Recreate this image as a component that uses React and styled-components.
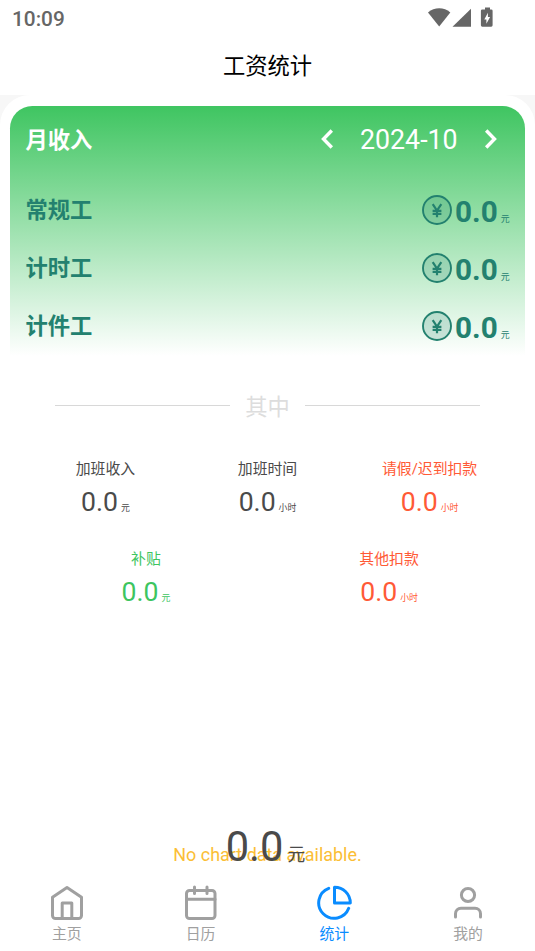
import React from "react";
import styled, { createGlobalStyle } from "styled-components";

const GlobalStyle = createGlobalStyle`
  * {
    box-sizing: border-box;
  }
  body {
    margin: 0;
    background: #ffffff;
    font-family: Roboto, "Noto Sans CJK SC", sans-serif;
  }
`;

const wages = ["常规工", "计时工", "计件工"];

const topStats = [
  { label: "加班收入", value: "0.0", unit: "元", color: "#4a4a4a" },
  { label: "加班时间", value: "0.0", unit: "小时", color: "#4a4a4a" },
  { label: "请假/迟到扣款", value: "0.0", unit: "小时", color: "#ff5a36" },
];

const bottomStats = [
  { label: "补贴", value: "0.0", unit: "元", color: "#3dc55f" },
  { label: "其他扣款", value: "0.0", unit: "小时", color: "#ff5a36" },
];

const tabs = [
  { label: "主页", icon: <HomeIcon /> },
  { label: "日历", icon: <CalendarIcon /> },
  { label: "统计", icon: <ChartIcon />, active: true },
  { label: "我的", icon: <UserIcon /> },
];

export default function App() {
  return (
    <Screen>
      <GlobalStyle />
      <StatusBar>
        <Clock>10:09</Clock>
        <StatusIcons />
      </StatusBar>
      <TitleBar>工资统计</TitleBar>
      <Backdrop>
        <Content>
          <IncomeCard>
            <CardHeader>
              <CardTitle>月收入</CardTitle>
              <MonthPicker>
                <Chevron d="M12.800 2.500 4.500 11l8.300 8.500" />
                <Month>2024-10</Month>
                <Chevron d="M3.200 2.500 11.500 11l-8.300 8.500" />
              </MonthPicker>
            </CardHeader>
            {wages.map((name) => (
              <WageRow key={name}>
                <WageName>{name}</WageName>
                <Amount>
                  <YuanIcon />
                  <AmountValue>0.0</AmountValue>
                  <Unit>元</Unit>
                </Amount>
              </WageRow>
            ))}
          </IncomeCard>
          <Divider>
            <Line />
            <span>其中</span>
            <Line />
          </Divider>
          <StatRow>
            {topStats.map((s) => (
              <StatItem key={s.label} {...s} />
            ))}
          </StatRow>
          <StatRow>
            {bottomStats.map((s) => (
              <StatItem key={s.label} {...s} />
            ))}
          </StatRow>
          <ChartArea>
            <NoData>No chart data available.</NoData>
            <Total>
              0.0<small>元</small>
            </Total>
          </ChartArea>
        </Content>
      </Backdrop>
      <TabBar>
        {tabs.map((t) => (
          <Tab key={t.label} $active={t.active}>
            {t.icon}
            <span>{t.label}</span>
          </Tab>
        ))}
      </TabBar>
    </Screen>
  );
}

function StatItem({ label, value, unit, color }) {
  return (
    <Stat $color={color}>
      <StatLabel>{label}</StatLabel>
      <StatValue>
        {value}
        <Unit>{unit}</Unit>
      </StatValue>
    </Stat>
  );
}

function StatusIcons() {
  return (
    <svg width="68" height="22" viewBox="0 0 68 22" fill="#666666">
      <path d="M0 5.500C6.500-.1 16-.1 22.300 5.500L11.200 19.500z" />
      <path d="M24.500 19.700 43 1.800v17.900z" />
      <path d="M57 .6h5v1.800h1.200a1.400 1.400 0 0 1 1.400 1.400v14.500a1.400 1.400 0 0 1-1.400 1.400h-8.900a1.400 1.400 0 0 1-1.400-1.400V3.800a1.400 1.400 0 0 1 1.400-1.400H57z" />
      <path d="M59.900 5.700 56.300 12.400h2.100v4.300l3.700-6.700h-2.200z" fill="#ffffff" />
    </svg>
  );
}

function Chevron({ d }) {
  return (
    <svg width="16" height="22" viewBox="0 0 16 22" fill="none" stroke="#ffffff" strokeWidth="3.400">
      <path d={d} />
    </svg>
  );
}

function YuanIcon() {
  return (
    <svg width="30" height="30" viewBox="0 0 30 30" fill="none" stroke="#23816f">
      <circle cx="15" cy="15" r="14" fill="#23816f" fillOpacity="0.2" strokeWidth="1.900" />
      <path d="M10.700 9.200 15 15.500l4.300-6.300M15 15V22.300M10.600 15.800h8.800M10.600 18.900h8.800" strokeWidth="2.200" />
    </svg>
  );
}

function HomeIcon() {
  return (
    <TabIcon viewBox="0 0 36 36">
      <path d="M3.500 12.300 18 2.500l14.500 9.800V30.500a3 3 0 0 1-3 3h-23a3 3 0 0 1-3-3z" />
      <path d="M13.200 33V18h9.600V33" />
    </TabIcon>
  );
}

function CalendarIcon() {
  return (
    <TabIcon viewBox="0 0 36 36">
      <rect x="3.500" y="5.500" width="28.500" height="28" rx="3" />
      <path d="M3.500 14.200H32M11.500 2v6.500M24 2v6.500" />
    </TabIcon>
  );
}

function ChartIcon() {
  return (
    <TabIcon viewBox="0 0 36 36">
      <path d="M12.700 3.300A15.500 15.500 0 1 0 32.700 23.300" />
      <path d="M18.500 2.200v15.800H34.300A15.700 15.700 0 0 0 18.500 2.200z" />
    </TabIcon>
  );
}

function UserIcon() {
  return (
    <TabIcon viewBox="0 0 36 36">
      <circle cx="18" cy="10" r="6.600" />
      <path d="M5.500 32V28.700a5.500 5.500 0 0 1 5.500-5.500h14a5.500 5.500 0 0 1 5.500 5.500v3.300" />
    </TabIcon>
  );
}

const Screen = styled.div`
  width: 535px;
  height: 951px;
  display: flex;
  flex-direction: column;
  overflow: hidden;
`;

const StatusBar = styled.div`
  height: 36px;
  flex-shrink: 0;
  display: flex;
  justify-content: space-between;
  align-items: flex-start;
  padding: 7px 39px 0 12px;
`;

const Clock = styled.span`
  font-size: 20.8px;
  font-weight: 500;
  line-height: 24px;
  color: #666666;
`;

const TitleBar = styled.div`
  height: 59px;
  flex-shrink: 0;
  text-align: center;
  font-size: 22.3px;
  line-height: 61px;
  color: #000000;
`;

const Backdrop = styled.div`
  flex: 1;
  min-height: 0;
  background: #f7f7f7;
`;

const Content = styled.div`
  height: 100%;
  background: #ffffff;
  border-radius: 30px 30px 0 0;
  padding: 10.6px 10.4px 0;
  display: flex;
  flex-direction: column;
`;

const IncomeCard = styled.div`
  height: 252px;
  flex-shrink: 0;
  border-radius: 22.3px 22.3px 0 0;
  background: linear-gradient(#3fc561, #ffffff 250px);
  padding: 0 15px;
`;

const CardHeader = styled.div`
  height: 75px;
  display: flex;
  justify-content: space-between;
  padding: 17px 11px 0 0;
`;

const CardTitle = styled.div`
  font-size: 22.3px;
  font-weight: 700;
  line-height: 35px;
  color: #ffffff;
`;

const MonthPicker = styled.div`
  height: 33px;
  display: flex;
  align-items: center;
  gap: 25px;
`;

const Month = styled.span`
  font-size: 26.75px;
  line-height: 33px;
  color: #ffffff;
  padding-top: 2px;
`;

const WageRow = styled.div`
  height: 58px;
  display: flex;
  justify-content: space-between;
  color: #23816f;
`;

const WageName = styled.div`
  font-size: 22.3px;
  font-weight: 700;
  line-height: 58px;
`;

const Amount = styled.div`
  display: flex;
  align-items: baseline;
  padding-top: 14px;
  svg {
    align-self: flex-start;
  }
`;

const AmountValue = styled.span`
  font-size: 29.7px;
  font-weight: 700;
  line-height: 33px;
  margin-left: 3px;
`;

const Unit = styled.span`
  font-size: 8.9px;
  line-height: 12px;
  margin-left: 3px;
`;

const Divider = styled.div`
  height: 33px;
  flex-shrink: 0;
  margin: 33px 44.600px 0;
  display: flex;
  align-items: center;
  gap: 15px;
  font-size: 22.3px;
  line-height: 33px;
  color: #dddddd;
`;

const Line = styled.div`
  flex: 1;
  height: 1px;
  margin-bottom: 3px;
  background: #d8d8d8;
`;

const StatRow = styled.div`
  height: 90px;
  flex-shrink: 0;
  display: flex;
  padding: 0 14px;
  &:nth-child(3) {
    margin-top: 34px;
  }
`;

const Stat = styled.div`
  flex: 1;
  display: flex;
  flex-direction: column;
  align-items: center;
  color: ${(p) => p.$color};
`;

const StatLabel = styled.div`
  font-size: 14.86px;
  line-height: 22px;
  white-space: nowrap;
`;

const StatValue = styled.div`
  display: flex;
  align-items: baseline;
  margin-top: 6px;
  font-size: 26.6px;
  line-height: 32px;
`;

const ChartArea = styled.div`
  flex: 1;
  display: flex;
  flex-direction: column;
  justify-content: flex-end;
  align-items: center;
`;

const NoData = styled.div`
  height: 22px;
  font-size: 17.95px;
  line-height: 22px;
  color: #fbbe36;
`;

/* the total is drawn over the empty chart message */
const Total = styled.div`
  margin-top: -43px;
  margin-bottom: 7px;
  position: relative;
  left: -2px;
  font-size: 41.6px;
  line-height: 48px;
  color: #4a4a4a;
  small {
    font-size: 17.8px;
    line-height: 20px;
    margin-left: 4px;
  }
`;

const TabBar = styled.div`
  height: 73px;
  flex-shrink: 0;
  display: flex;
`;

const Tab = styled.div`
  flex: 1;
  display: flex;
  flex-direction: column;
  align-items: center;
  gap: 2px;
  padding-top: 7px;
  font-size: 14.86px;
  line-height: 22px;
  color: ${(p) => (p.$active ? "#0a8cff" : "#a0a0a0")};
`;

const TabIcon = styled.svg`
  width: 36px;
  height: 36px;
  fill: none;
  stroke: currentColor;
  stroke-width: 3;
  stroke-linecap: round;
  stroke-linejoin: round;
`;
